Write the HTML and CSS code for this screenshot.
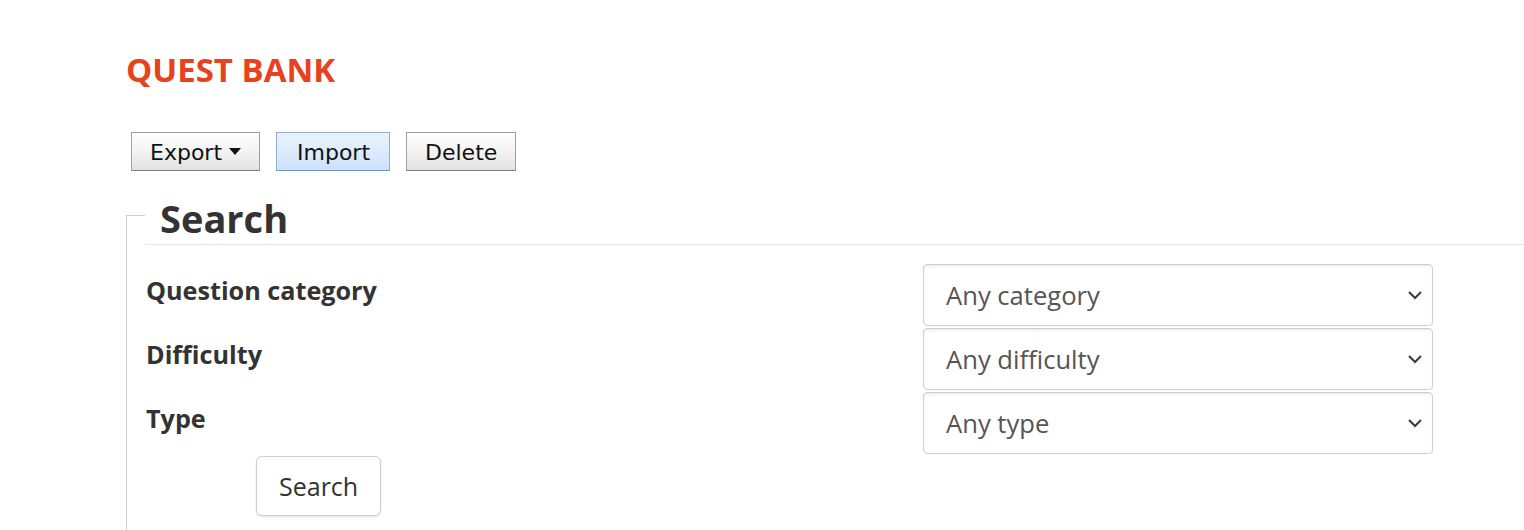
FILE: index.html
```html
<!DOCTYPE html>
<html lang="en">
<head>
<meta charset="utf-8">
<title>Quest Bank</title>
<link rel="stylesheet" href="styles.css">
</head>
<body>
<div class="page">
  <h1 class="title">QUEST BANK</h1>
  <div class="toolbar">
    <button class="tbtn" type="button">Export <svg class="caret" width="12" height="7" viewBox="0 0 12 7"><polygon points="0,0 12,0 6,7" fill="#111"/></svg></button>
    <button class="tbtn tbtn-active" type="button">Import</button>
    <button class="tbtn" type="button">Delete</button>
  </div>
  <fieldset class="search">
    <legend class="search-legend">Search</legend>
    <div class="grid">
      <label class="lbl" for="cat">Question category</label>
      <div class="sel-wrap">
        <select id="cat" class="sel"><option>Any category</option></select>
        <svg class="chev" width="16" height="10" viewBox="0 0 16 10"><polyline points="2,2 8,8 14,2" fill="none" stroke="#3a3a3a" stroke-width="2"/></svg>
      </div>
      <label class="lbl" for="dif">Difficulty</label>
      <div class="sel-wrap">
        <select id="dif" class="sel"><option>Any difficulty</option></select>
        <svg class="chev" width="16" height="10" viewBox="0 0 16 10"><polyline points="2,2 8,8 14,2" fill="none" stroke="#3a3a3a" stroke-width="2"/></svg>
      </div>
      <label class="lbl" for="typ">Type</label>
      <div class="sel-wrap">
        <select id="typ" class="sel"><option>Any type</option></select>
        <svg class="chev" width="16" height="10" viewBox="0 0 16 10"><polyline points="2,2 8,8 14,2" fill="none" stroke="#3a3a3a" stroke-width="2"/></svg>
      </div>
    </div>
    <button class="search-btn" type="button">Search</button>
  </fieldset>
</div>
</body>
</html>
```
FILE: styles.css
```css
html, body {
  margin: 0;
  padding: 0;
  overflow: hidden;
  background: #fff;
}
body {
  font-family: "Open Sans", "Liberation Sans", sans-serif;
  color: #333;
}
.page {
  padding: 47px 0 0 126px;
}
.title {
  margin: 0;
  font-size: 33px;
  line-height: 45px;
  font-weight: 700;
  color: #e8411e;
}
.toolbar {
  display: flex;
  gap: 16px;
  margin: 40px 0 0 5px;
}
.tbtn {
  box-sizing: border-box;
  height: 39px;
  display: flex;
  align-items: center;
  gap: 7px;
  padding: 2px 18px 0 18px;
  font-family: "DejaVu Sans", "Liberation Sans", sans-serif;
  font-size: 22px;
  color: #111;
  background: linear-gradient(#ffffff, #f3f3f3 50%, #e2e2e2);
  border: 1px solid #a0a0a0;
  border-bottom-color: #7d7d7d;
  border-radius: 0;
  margin: 0;
}
.tbtn-active {
  padding: 2px 19px 0 20px;
  background: linear-gradient(#e9f3fe, #dcebfd 50%, #cbe1fa);
  border-color: #93add0;
  border-bottom-color: #7895bd;
}
.caret {
  display: block;
  margin-top: -2px;
}
.search {
  margin: 14px 0 0 0;
  padding: 0 0 200px 18px;
  border: 1px solid #cfcfcf;
  border-right: none;
  min-width: 0;
}
.search-legend {
  box-sizing: border-box;
  width: 100%;
  padding: 7px 0 0 15px;
  font-size: 38px;
  line-height: 52px;
  font-weight: 700;
  color: #333;
  border-bottom: 1px solid #e3e3e3;
}
.grid {
  display: grid;
  grid-template-columns: 778px 510px;
  grid-auto-rows: 62px;
  row-gap: 2px;
  margin-top: 19px;
}
.lbl {
  padding: 9px 0 0 1px;
  font-size: 25.2px;
  line-height: 34px;
  font-weight: 700;
  color: #333;
}
.sel-wrap {
  position: relative;
}
.sel {
  -webkit-appearance: none;
  appearance: none;
  box-sizing: border-box;
  width: 100%;
  height: 62px;
  margin: 0;
  padding: 0 40px 0 22px;
  font-family: "Open Sans", "Liberation Sans", sans-serif;
  font-size: 25.6px;
  color: #555;
  background: #fff;
  border: 1px solid #cfcfcf;
  border-radius: 4px;
  box-shadow: inset 0 2px 2px rgba(0, 0, 0, 0.06);
}
.chev {
  position: absolute;
  right: 10px;
  top: 26px;
  pointer-events: none;
}
.search-btn {
  display: block;
  box-sizing: border-box;
  height: 60px;
  margin: 2px 0 0 111px;
  padding: 0 22px;
  font-family: "Open Sans", "Liberation Sans", sans-serif;
  font-size: 25px;
  color: #333;
  background: #fff;
  border: 1px solid #cfcfcf;
  border-radius: 6px;
  box-shadow: 0 1px 2px rgba(0, 0, 0, 0.12);
}
```
